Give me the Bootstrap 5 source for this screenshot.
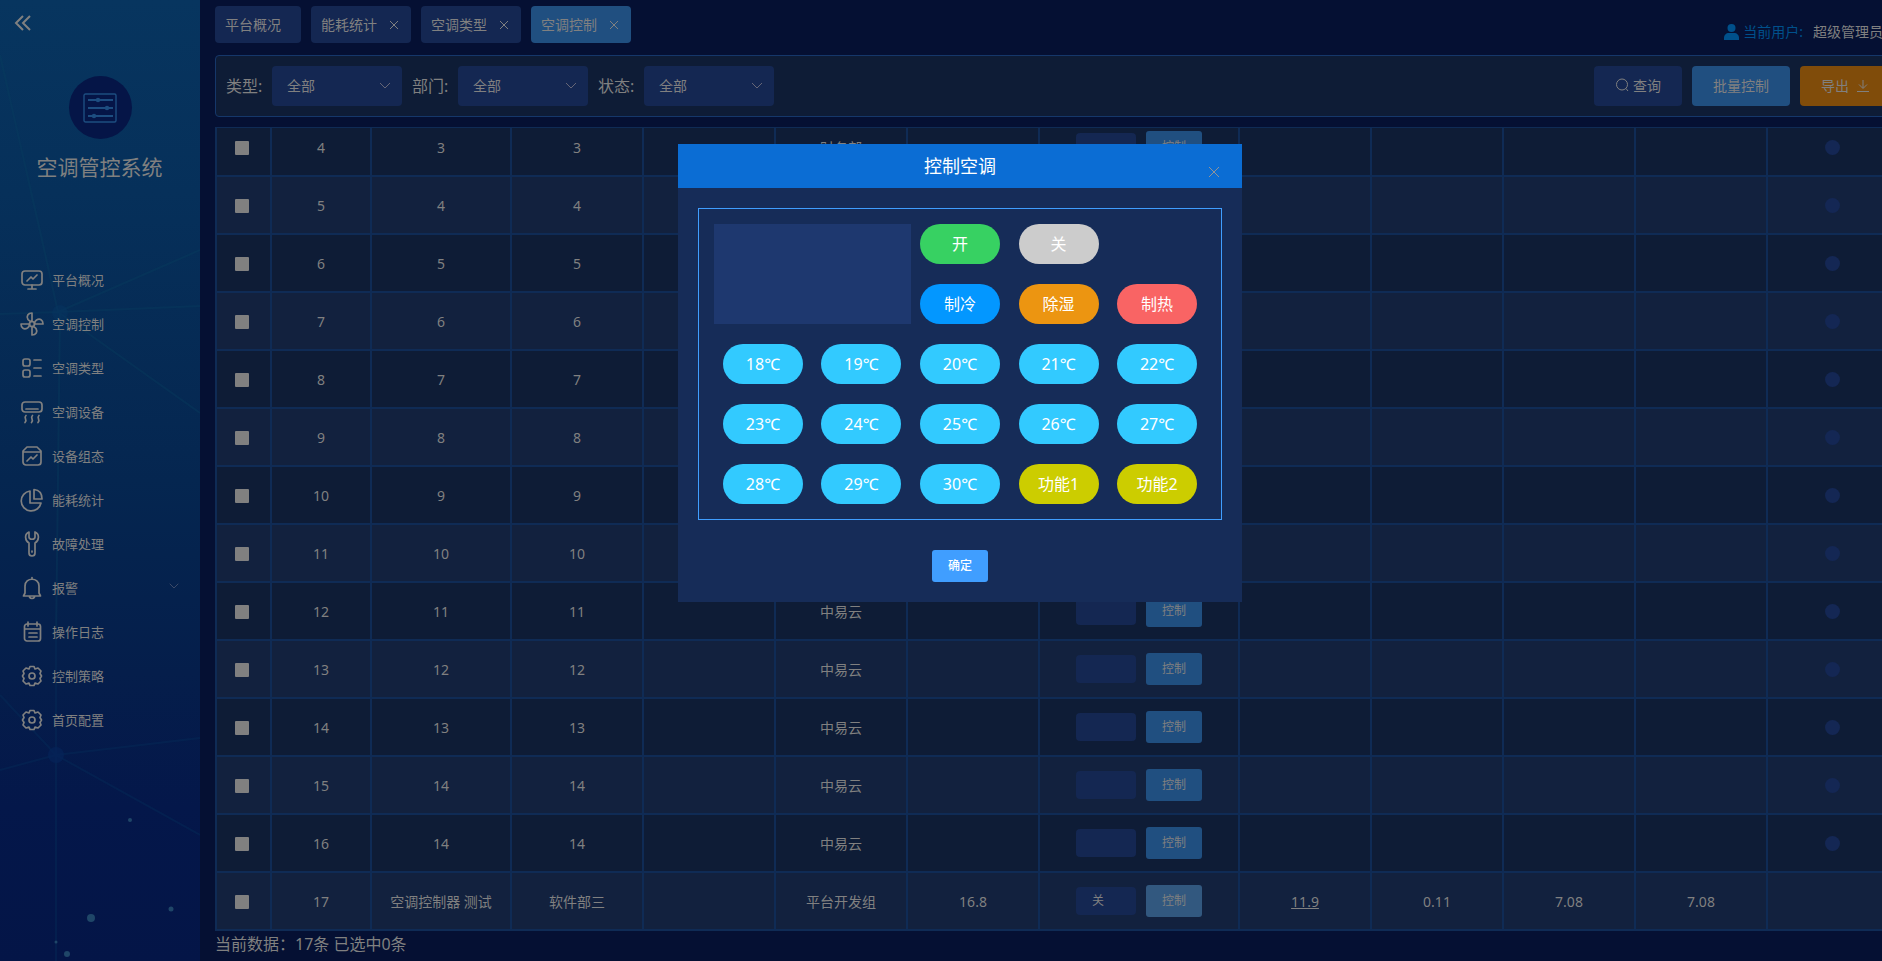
<!DOCTYPE html>
<html lang="zh-CN">
<head>
<meta charset="utf-8">
<meta name="viewport" content="width=device-width, initial-scale=1">
<title>空调管控系统</title>
<link rel="stylesheet" href="https://cdn.jsdelivr.net/npm/bootstrap@5.3.0/dist/css/bootstrap.min.css">
<style>
:root{--ink:#808080;--box:#142752;--line:#0f2b55;--act:#204f80}
body{font-family:"Noto Sans","Noto Sans CJK SC",sans-serif;font-size:14px;line-height:20px;color:var(--ink);background:#051033}
button,select,input{font-family:inherit}
/* sidebar */
.side{width:200px;flex:none;background:linear-gradient(#07355f 0,#06305a 20%,#052650 50%,#051e4b 70%,#04174a 84%,#041547 100%)}
.side-art{position:absolute;inset:0;width:100%;height:100%}
.fold{height:76px;padding:15px 0 0 14px}
.fold button{display:block;line-height:0}
.bare{background:none;border:0;padding:0;color:inherit}
.logo{width:63px;height:63px;background:#051547}
.brand{font-size:21px;line-height:30px;margin:13px 0 0;font-weight:400;padding-right:1px}
.menu{padding-top:76px}
.menu a{height:44px;padding:0 21px 0 20px;font-size:13px;color:var(--ink);text-decoration:none}
.menu a svg{width:24px;height:26px;margin-right:8px;fill:none;stroke:currentColor;stroke-width:1.7;stroke-linecap:round;stroke-linejoin:round}
.menu a svg.arrow{width:10px;height:10px;margin:0 0 4px auto;stroke:#3c4a68;stroke-width:1}
/* work area */
.work{padding-left:15px;min-width:0}
.wide{margin-right:-17px;height:100vh}
.topbar{height:55px;flex:none;padding:6px 16px 0 0}
.tabitem{height:37px;border-radius:4px;background:var(--box);padding:0 12px 0 10px}
.tabitem a{color:inherit;text-decoration:none}
.tabitem.home{padding-right:20px}
.tabitem.on{background:var(--act)}
.tabitem svg{width:10px;height:10px;display:block;stroke:currentColor}
.user{margin-top:16px;color:#00508b;line-height:20px}
.user b{font-weight:400;color:var(--ink)}
.filters{height:62px;border:1px solid #15376a;border-radius:4px;background:#0e1c36;padding:0 8px 0 10px}
.filters label{font-size:16px;width:36px;margin-right:10px;white-space:nowrap}
.pick{appearance:none;width:130px;height:40px;border:0;border-radius:4px;margin-right:10px;padding:0 15px;color:var(--ink);background:var(--box) url("data:image/svg+xml,%3Csvg xmlns='http://www.w3.org/2000/svg' viewBox='0 0 12 8' fill='none' stroke='%23667' stroke-width='1'%3E%3Cpath d='M1 1l5 5 5-5'/%3E%3C/svg%3E") no-repeat right 11px center/12px 8px}
.act{height:40px;border:0;border-radius:4px;padding:0 21px;color:var(--ink);white-space:nowrap}
.act svg{fill:none;stroke:currentColor;stroke-width:1;vertical-align:-1px}
.act-find{background:var(--box)}
.act-batch{background:var(--act)}
.act-export{background:#804c0a}
.gap-ten{gap:10px}
.grid-wrap{margin-top:10px;border-top:1px solid var(--line);min-height:0}
.units{table-layout:fixed;width:100%;border-collapse:collapse;text-align:center;flex:none}
.units td{border:2px solid var(--line);height:58px;padding:2px 0 0;background:#0e1c36}
.units td.ops{padding:0}
.units tr:nth-child(even) td{background:#12213e}
.units a{color:inherit}
.units td:first-child{padding-right:4px}
.units td:last-child{padding:0}
.c-pick{width:55px}.c-num{width:100px}.c-name{width:140px}.c-std{width:132px}.c-ops{width:200px}
.tick{appearance:none;width:14px;height:14px;border-radius:1px;background:var(--ink);display:block;margin:0 auto}
.state{width:60px;height:28px;border-radius:4px;background:var(--box);font-size:12px;line-height:28px;padding-left:16px;text-align:left}
.go{width:56px;height:32px;border:0;border-radius:3px;background:var(--act);color:var(--ink);font-size:12px;padding:0}
.units tr:last-child .go{background:#32587f}
.lamp{width:15px;height:15px;border-radius:50%;background:#142754}
.total{height:30px;flex:none;font-size:16px;line-height:26px}
/* dialog */
.veil{position:fixed;inset:0;z-index:10;padding-left:38px}
.dlg{width:30vw;margin:15vh auto 0;background:#162c58}
.dlg-head{height:44px;background:#0b6dd4;color:#fff;position:relative}
.dlg-head h2{font-size:18px;line-height:44px;margin:0;font-weight:400;text-align:center}
.dlg-x{position:absolute;right:23px;top:23px;line-height:0;color:#909399}
.remote{margin:20px 20px 0;border:1px solid #409eff;padding:15px;display:grid;grid-template-columns:repeat(5,1fr);grid-auto-rows:40px;row-gap:20px;justify-items:center}
.screen{grid-area:1/1/3/3;justify-self:stretch;background:#1e386f}
.key{width:80px;height:40px;border:0;border-radius:20px;color:#fff;font-size:16px;padding:0;background:#32caff}
.k-on{background:#37d162;grid-column:3}.k-off{background:#ccc}.k-cool{background:#0397ff;grid-column:3}.k-dry{background:#ec9511}.k-heat{background:#f96464}.k-fn{background:#cccd00}
.sure{width:56px;height:32px;border:0;border-radius:3px;background:#409eff;color:#fff;font-size:12px;font-weight:500;padding:0;margin:30px 0 20px}
</style>
</head>
<body class="overflow-hidden">
<div class="d-flex vh-100">
<aside class="side position-relative">
<svg class="side-art" viewBox="0 0 200 961" preserveAspectRatio="none" aria-hidden="true">
<g stroke="#08405f" stroke-width="2" opacity=".35"><path fill="none" d="M0 55L42 240L58 312L200 250M58 312L200 306M58 312L0 314M58 312L200 413M60 312L56 640"/></g>
<circle cx="60" cy="313" r="8" fill="#063460" opacity=".5"/>
<g stroke="#07305c" stroke-width="2" opacity=".35"><path fill="none" d="M56 640V961M0 695L56 755L200 738M56 755L0 770M56 755L200 835"/></g>
<circle cx="56" cy="755" r="8" fill="#052358" opacity=".7"/>
<g fill="#1f4668"><circle cx="130" cy="820" r="2"/><circle cx="171" cy="909" r="2.5"/><circle cx="91" cy="918" r="4"/><circle cx="67" cy="954" r="3"/><circle cx="56" cy="942" r="1.5"/></g>
</svg>
<div class="position-relative">
<div class="fold"><button class="bare" type="button" aria-label="收起菜单"><svg width="18" height="16" viewBox="0 0 18 16" fill="none" stroke="currentColor" stroke-width="2"><path d="M9 1L2 8l7 7M16 1L9 8l7 7"/></svg></button></div>
<div class="logo rounded-circle mx-auto d-flex align-items-center justify-content-center">
<svg width="34" height="30" viewBox="0 0 34 30" fill="none" stroke="#1d4d80" stroke-width="1.4"><rect x="1" y="1" width="32" height="28" rx="1.5"/><path stroke-width="2" d="M5 7h25M5 15h25M5 23h25"/><g fill="#1d4d80" stroke="none"><circle cx="15" cy="7" r="2.2"/><circle cx="24" cy="15" r="2.2"/><circle cx="11" cy="23" r="2.2"/></g></svg></div>
<h1 class="brand text-center">空调管控系统</h1>
<nav class="menu d-flex flex-column">
<a href="#" class="d-flex align-items-center"><svg viewBox="0 0 24 26"><rect x="2" y="4" width="20" height="14" rx="3"/><path d="M7 14l4-4 2 2 4-4M12 18v3M8 22h8"/></svg>平台概况</a>
<a href="#" class="d-flex align-items-center"><svg viewBox="0 0 24 26"><circle cx="12" cy="13" r="2.5"/><path d="M12 10.500V2c-4 0-6 3-4 6.500 1 1.500 2 2 4 2M14.500 13H23c0-4-3-6-6.500-4-1.500 1-2 2-2 4M12 15.500V24c4 0 6-3 4-6.500-1-1.500-2-2-4-2M9.500 13H1c0 4 3 6 6.500 4 1.500-1 2-2 2-4"/></svg>空调控制</a>
<a href="#" class="d-flex align-items-center"><svg viewBox="0 0 24 26"><rect x="3" y="4" width="7" height="7" rx="2"/><rect x="3" y="15" width="7" height="7" rx="2"/><path d="M14 5h7M14 13h7M14 21h7"/></svg>空调类型</a>
<a href="#" class="d-flex align-items-center"><svg viewBox="0 0 24 26"><rect x="2" y="3" width="20" height="10" rx="3"/><path d="M6 10h12M6 16.500c-3 3 2 3.500-1 7M12.500 16.500c-3 3 2 3.500-1 7M19 16.500c-3 3 2 3.500-1 7"/></svg>空调设备</a>
<a href="#" class="d-flex align-items-center"><svg viewBox="0 0 24 26"><path d="M7 4h10l4 4v11a3 3 0 0 1-3 3H6a3 3 0 0 1-3-3V8zM4 9h16M7 18l4-4 2 2 4-4"/></svg>设备组态</a>
<a href="#" class="d-flex align-items-center"><svg viewBox="0 0 24 26"><path d="M10 4a10 10 0 1 0 11 12H10zM14 2.500V12h8C22 6 19 3 14 2.500z"/></svg>能耗统计</a>
<a href="#" class="d-flex align-items-center"><svg viewBox="0 0 24 26"><path d="M9 1c-5 2-4 9 0 11v10a3 3 0 0 0 6 0V12c4-2 5-9 0-11v5c0 3-6 3-6 0zM12 20v1"/></svg>故障处理</a>
<a href="#" class="d-flex align-items-center"><svg viewBox="0 0 24 26"><path d="M5 18V11c0-9 14-9 14 0v7l1.500 3h-17zM12 2.500v1M9.500 22c1 2 4 2 5 0"/></svg>报警<svg class="arrow" viewBox="0 0 10 10"><path d="M1 3l4 4 4-4"/></svg></a>
<a href="#" class="d-flex align-items-center"><svg viewBox="0 0 24 26"><rect x="4.500" y="5" width="16" height="17" rx="2.500"/><path d="M8 3v4M17 3v4M5 10h15M9 14h8M9 18h8"/></svg>操作日志</a>
<a href="#" class="d-flex align-items-center"><svg viewBox="0 0 24 26"><circle cx="12" cy="13" r="3"/><path d="M9 6l1-2.500h4L15 6l3-1 3 3-1 2.500 1.500 2.500-1.500 2.500 1 2.500-3 3-3-1-1 2.500h-4L9 20l-3 1-3-3 1-2.500L2.500 13 4 10.500 3 8l3-3z"/></svg>控制策略</a>
<a href="#" class="d-flex align-items-center"><svg viewBox="0 0 24 26"><circle cx="12" cy="13" r="3"/><path d="M9 6l1-2.500h4L15 6l3-1 3 3-1 2.500 1.500 2.500-1.500 2.500 1 2.500-3 3-3-1-1 2.500h-4L9 20l-3 1-3-3 1-2.500L2.500 13 4 10.500 3 8l3-3z"/></svg>首页配置</a>
</nav>
</div>
</aside>

<main class="work flex-grow-1 overflow-hidden">
<div class="wide d-flex flex-column">
<header class="topbar d-flex align-items-start">
<div class="d-flex gap-ten">
<div class="tabitem home d-flex align-items-center"><a href="#">平台概况</a></div>
<div class="tabitem d-flex align-items-center gap-2"><a href="#" class="pe-1">能耗统计</a><button class="bare" type="button" aria-label="关闭"><svg viewBox="0 0 10 10"><path d="M1 1l8 8M9 1L1 9"/></svg></button></div>
<div class="tabitem d-flex align-items-center gap-2"><a href="#" class="pe-1">空调类型</a><button class="bare" type="button" aria-label="关闭"><svg viewBox="0 0 10 10"><path d="M1 1l8 8M9 1L1 9"/></svg></button></div>
<div class="tabitem on d-flex align-items-center gap-2"><a href="#" class="pe-1">空调控制</a><button class="bare" type="button" aria-label="关闭"><svg viewBox="0 0 10 10"><path d="M1 1l8 8M9 1L1 9"/></svg></button></div>
</div>
<div class="user ms-auto d-flex align-items-center gap-ten"><span class="d-flex align-items-center"><svg class="me-1" width="15" height="16" viewBox="0 0 15 16" fill="currentColor"><circle cx="7.500" cy="4" r="4"/><path d="M0 16v-2c0-3 2-5 5-5h5c3 0 5 2 5 5v2z"/></svg>当前用户:</span><b>超级管理员</b></div>
</header>

<form class="filters d-flex align-items-center flex-shrink-0" onsubmit="return false">
<label for="f-type">类型:</label><select class="pick" id="f-type"><option>全部</option></select>
<label for="f-dept">部门:</label><select class="pick" id="f-dept"><option>全部</option></select>
<label for="f-state">状态:</label><select class="pick" id="f-state"><option>全部</option></select>
<div class="ms-auto d-flex gap-ten">
<button class="act act-find" type="submit"><svg class="me-1" width="14" height="14" viewBox="0 0 14 14"><circle cx="7" cy="6.500" r="5.500"/><path d="M11 10.500l2 2.500"/></svg>查询</button>
<button class="act act-batch" type="button">批量控制</button>
<button class="act act-export" type="button">导出<svg class="ms-2" width="12" height="12" viewBox="0 0 12 12"><path d="M6 0v8M2 4.500l4 4 4-4M0 11.500h12"/></svg></button>
</div>
</form>

<div class="grid-wrap flex-grow-1 overflow-hidden d-flex flex-column justify-content-end">
<table class="units">
<colgroup><col class="c-pick"><col class="c-num"><col class="c-name"><col class="c-std" span="4"><col class="c-ops"><col class="c-std" span="4"><col></colgroup>
<tbody id="rows"></tbody>
</table>
</div>
<div class="total">当前数据：17条 已选中0条</div>
</div>
</main>
</div>

<div class="veil">
<section class="dlg" role="dialog" aria-labelledby="dlg-title">
<div class="dlg-head"><h2 id="dlg-title">控制空调</h2><button class="bare dlg-x" type="button" aria-label="关闭"><svg width="10" height="10" viewBox="0 0 10 10" stroke="currentColor"><path d="M0 0l10 10M10 0L0 10"/></svg></button></div>
<div class="overflow-hidden">
<div class="remote">
<div class="screen"></div>
<button class="key k-on">开</button><button class="key k-off">关</button>
<button class="key k-cool">制冷</button><button class="key k-dry">除湿</button><button class="key k-heat">制热</button>
<button class="key">18℃</button><button class="key">19℃</button><button class="key">20℃</button><button class="key">21℃</button><button class="key">22℃</button>
<button class="key">23℃</button><button class="key">24℃</button><button class="key">25℃</button><button class="key">26℃</button><button class="key">27℃</button>
<button class="key">28℃</button><button class="key">29℃</button><button class="key">30℃</button><button class="key k-fn">功能1</button><button class="key k-fn">功能2</button>
</div>
<div class="text-center"><button class="sure" type="button">确定</button></div>
</div>
</section>
</div>

<script>
const rows = [];
for (let n = 4; n <= 16; n++) {
  const unit = Math.min(n - 1, 14);
  rows.push({n, name: unit, group: unit, dept: n === 4 ? '财务部' : n > 11 ? '中易云' : '', temp: '', state: '', vals: ['', '', '', ''], lamp: true});
}
rows.push({n: 17, name: '空调控制器 测试', group: '软件部三', dept: '平台开发组', temp: '16.8', state: '关', vals: ['<a href="#">11.9</a>', '0.11', '7.08', '7.08'], lamp: false});
document.getElementById('rows').innerHTML = rows.map(r => `<tr>
<td><input type="checkbox" class="tick" aria-label="选择 ${r.n}"></td><td>${r.n}</td><td>${r.name}</td><td>${r.group}</td><td></td><td>${r.dept}</td><td>${r.temp}</td>
<td class="ops"><div class="d-flex align-items-center justify-content-center gap-ten"><div class="state">${r.state}</div><button class="go" type="button">控制</button></div></td>
${r.vals.map(v => `<td>${v}</td>`).join('')}<td>${r.lamp ? '<div class="lamp mx-auto"></div>' : ''}</td></tr>`).join('');
</script>
<script src="https://cdn.jsdelivr.net/npm/bootstrap@5.3.0/dist/js/bootstrap.bundle.min.js"></script>
</body>
</html>
